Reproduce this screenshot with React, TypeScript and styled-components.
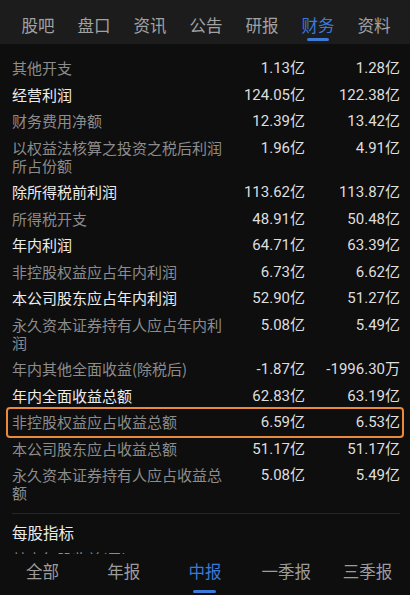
import styled, { createGlobalStyle } from 'styled-components';

const GlobalStyle = createGlobalStyle`
  html, body {
    margin: 0;
    padding: 0;
    background: #0e0e0e;
  }
  body {
    font-family: Roboto, "Noto Sans CJK SC", sans-serif;
  }
`;

type Row = { label: string; a: string; b: string; strong?: boolean; mark?: boolean };

// rows of the income statement, in display order
const rows: Row[] = [
  { label: '其他开支', a: '1.13亿', b: '1.28亿' },
  { label: '经营利润', a: '124.05亿', b: '122.38亿', strong: true },
  { label: '财务费用净额', a: '12.39亿', b: '13.42亿' },
  { label: '以权益法核算之投资之税后利润所占份额', a: '1.96亿', b: '4.91亿' },
  { label: '除所得税前利润', a: '113.62亿', b: '113.87亿', strong: true },
  { label: '所得税开支', a: '48.91亿', b: '50.48亿' },
  { label: '年内利润', a: '64.71亿', b: '63.39亿', strong: true },
  { label: '非控股权益应占年内利润', a: '6.73亿', b: '6.62亿' },
  { label: '本公司股东应占年内利润', a: '52.90亿', b: '51.27亿', strong: true },
  { label: '永久资本证券持有人应占年内利润', a: '5.08亿', b: '5.49亿' },
  { label: '年内其他全面收益(除税后)', a: '-1.87亿', b: '-1996.30万' },
  { label: '年内全面收益总额', a: '62.83亿', b: '63.19亿', strong: true },
  { label: '非控股权益应占收益总额', a: '6.59亿', b: '6.53亿', mark: true },
  { label: '本公司股东应占收益总额', a: '51.17亿', b: '51.17亿' },
  { label: '永久资本证券持有人应占收益总额', a: '5.08亿', b: '5.49亿' },
];

const topTabs = ['股吧', '盘口', '资讯', '公告', '研报', '财务', '资料'];
const bottomTabs = ['全部', '年报', '中报', '一季报', '三季报'];

const Page = styled.div`
  width: 410px;
  height: 595px;
  display: flex;
  flex-direction: column;
  background: #0e0e0e;
  overflow: hidden;
`;

const TopBar = styled.div`
  height: 44px;
  flex-shrink: 0;
  background: #1c1c1d;
  display: grid;
  grid-template-columns: repeat(7, 56px);
  padding-left: 10px;
`;

const TopTab = styled.div<{ $active?: boolean }>`
  position: relative;
  display: flex;
  align-items: center;
  justify-content: center;
  padding-top: 6px;
  font-size: 16.5px;
  font-family: "Noto Sans CJK SC", sans-serif;
  color: ${(p) => (p.$active ? '#3b7ad6' : '#a2a2a2')};
  &::after {
    content: '';
    display: ${(p) => (p.$active ? 'block' : 'none')};
    position: absolute;
    bottom: 3px;
    left: 50%;
    width: 22px;
    height: 3px;
    margin-left: -11px;
    border-radius: 2px;
    background: #3b7ad6;
  }
`;

const Body = styled.div`
  flex: 1;
  overflow: hidden;
  padding: 11px 0 0;
`;

const DataRow = styled.div<{ $mark?: boolean }>`
  display: grid;
  grid-template-columns: 224px 69px 95px;
  align-items: start;
  margin: 0 8px;
  padding: 4.25px 0 4.25px 4px;
  outline: ${(p) => (p.$mark ? '2px solid #ea8a3c' : 'none')};
  border-radius: 2px;
  font-size: 15px;
  line-height: 18px;
`;

const Label = styled.div<{ $strong?: boolean }>`
  max-width: 212px;
  color: ${(p) => (p.$strong ? '#ececec' : '#8c8c8c')};
  font-family: "Noto Sans CJK SC", sans-serif;
  word-break: break-all;
`;

const Value = styled.div`
  text-align: right;
  color: #dedede;
  font-family: Roboto, "Noto Sans CJK SC", sans-serif;
  white-space: nowrap;
`;

const Divider = styled.div`
  height: 1px;
  margin: 6px 10px 0 12px;
  background: #262626;
`;

const SectionTitle = styled.div`
  padding: 9px 12px 0;
  height: 27px;
  line-height: 18px;
  font-size: 15.5px;
  color: #ececec;
  font-family: "Noto Sans CJK SC", sans-serif;
`;

const SubLabel = styled.div`
  padding: 0 12px;
  font-size: 15px;
  line-height: 18px;
  color: #8c8c8c;
  font-family: "Noto Sans CJK SC", sans-serif;
`;

const BottomBar = styled.div`
  height: 41px;
  flex-shrink: 0;
  background: #0e0e0e;
  display: grid;
  grid-template-columns: repeat(5, 1fr);
  padding: 0 2px;
`;

const BottomTab = styled.div<{ $active?: boolean }>`
  position: relative;
  display: flex;
  justify-content: center;
  padding-top: 5px;
  font-size: 16.5px;
  font-family: "Noto Sans CJK SC", sans-serif;
  color: ${(p) => (p.$active ? '#3b7ad6' : '#9c9c9c')};
  &::after {
    content: '';
    display: ${(p) => (p.$active ? 'block' : 'none')};
    position: absolute;
    bottom: 2px;
    left: 50%;
    width: 23px;
    height: 3px;
    margin-left: -11.5px;
    border-radius: 2px;
    background: #3b7ad6;
  }
`;

export default function App() {
  return (
    <Page>
      <GlobalStyle />
      <TopBar>
        {topTabs.map((t) => (
          <TopTab key={t} $active={t === '财务'}>
            {t}
          </TopTab>
        ))}
      </TopBar>
      <Body>
        {rows.map((r) => (
          <DataRow key={r.label} $mark={r.mark}>
            <Label $strong={r.strong}>{r.label}</Label>
            <Value>{r.a}</Value>
            <Value>{r.b}</Value>
          </DataRow>
        ))}
        <Divider />
        <SectionTitle>每股指标</SectionTitle>
        <SubLabel>基本每股收益(元)</SubLabel>
      </Body>
      <BottomBar>
        {bottomTabs.map((t) => (
          <BottomTab key={t} $active={t === '中报'}>
            {t}
          </BottomTab>
        ))}
      </BottomBar>
    </Page>
  );
}
